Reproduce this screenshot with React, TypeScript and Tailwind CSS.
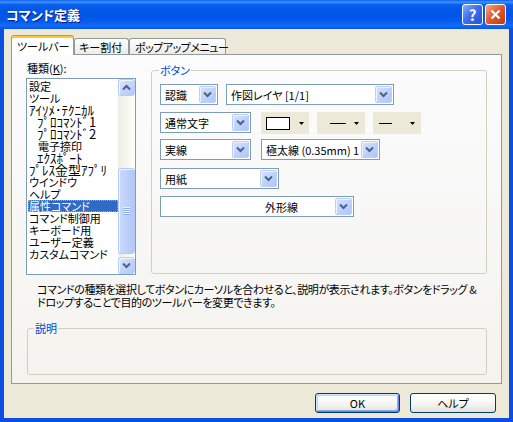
import type { ReactNode } from 'react';

const ITEMS: { label: string; indent?: 'sm' | 'md'; selected?: boolean; half?: boolean }[] = [
  { label: '設定' },
  { label: 'ツール' },
  { label: 'ｱｲｿﾒ･ﾃｸﾆｶﾙ', half: true },
  { label: 'ﾌﾟﾛｺﾏﾝﾄﾞ1', indent: 'sm', half: true },
  { label: 'ﾌﾟﾛｺﾏﾝﾄﾞ2', indent: 'sm', half: true },
  { label: '電子捺印', indent: 'md' },
  { label: 'ｴｸｽﾎﾟｰﾄ', indent: 'sm', half: true },
  { label: 'ﾌﾟﾚｽ金型ｱﾌﾟﾘ', half: true },
  { label: 'ウインドウ' },
  { label: 'ヘルプ' },
  { label: '属性コマンド', selected: true },
  { label: 'コマンド制御用' },
  { label: 'キーボード用' },
  { label: 'ユーザー定義' },
  { label: 'カスタムコマンド' },
];

function Chevron({ up = false }: { up?: boolean }) {
  return (
    <svg width="9" height="7" viewBox="0 0 9 7" className="block">
      <path
        d={up ? 'M1 5.5 L4.5 2 L8 5.5' : 'M1 1.5 L4.5 5 L8 1.5'}
        fill="none"
        stroke="#4D6185"
        strokeWidth="2"
      />
    </svg>
  );
}

function Tri({ className = '' }: { className?: string }) {
  return (
    <svg width="5" height="3" viewBox="0 0 5 3" className={`block ${className}`}>
      <polygon points="0,0 5,0 2.5,3" fill="#000" />
    </svg>
  );
}

function DropButton() {
  return (
    <div className="mr-[1px] flex h-[17px] w-[17px] shrink-0 items-center justify-center rounded-[2px] border border-[#BBCEF8] bg-[linear-gradient(135deg,#D6E3FE,#BCD0FB_60%,#AFC6F8)] shadow-[inset_1px_1px_0_#EEF3FF]">
      <Chevron />
    </div>
  );
}

function Combo({ className, children, textClass = 'pl-[4px]' }: { className: string; children: ReactNode; textClass?: string }) {
  return (
    <div className={`flex h-[21px] shrink-0 items-center border border-[#7F9DB9] bg-white ${className}`}>
      <span className={`min-w-0 flex-1 whitespace-nowrap ${textClass}`}>{children}</span>
      <DropButton />
    </div>
  );
}

function ScrollButton({ up = false }: { up?: boolean }) {
  return (
    <div className="flex h-[17px] w-[17px] shrink-0 items-center justify-center rounded-[3px] border border-[#B9CDF7] bg-[linear-gradient(135deg,#DCE7FE,#C1D3FC_55%,#B3C8F8)] shadow-[inset_1px_1px_0_#F4F7FF]">
      <Chevron up={up} />
    </div>
  );
}

function XpButton({ className, children, isDefault = false }: { className: string; children: ReactNode; isDefault?: boolean }) {
  return (
    <button
      type="button"
      className={`flex h-[20px] items-center justify-center rounded-[3px] border border-[#003C74] bg-[linear-gradient(to_bottom,#FFFFFF,#F5F5F1_55%,#E3E2D8)] ${
        isDefault
          ? 'shadow-[inset_1px_1px_0_#CEE7FF,inset_-1px_-1px_0_#6982EE,inset_2px_2px_0_#BCD4F6,inset_-2px_-2px_0_#89ADE4]'
          : ''
      } ${className}`}
    >
      {children}
    </button>
  );
}

export default function App() {
  return (
    <div className="relative flex h-[422px] w-[513px] flex-col overflow-hidden bg-[#0B4FE1] font-['Noto_Sans_CJK_JP','Noto_Sans_CJK_SC',sans-serif] text-[11px] leading-[12px] text-black [font-feature-settings:'palt']">
      {/* title bar */}
      <div className="flex h-[29px] shrink-0 items-center bg-[linear-gradient(to_bottom,#0A5DF0_0%,#3D95FF_7%,#0A5EEC_16%,#0055E5_45%,#0259EC_70%,#126BF8_88%,#0A55E0_100%)] pl-[6px] pr-[7px]">
        <span className="flex-1 text-[13px] font-bold leading-[14px] text-white [text-shadow:1px_1px_#0A1883]">コマンド定義</span>
        <div className="flex gap-[2px]">
          <div className="flex h-[21px] w-[21px] items-center justify-center rounded-[3px] border border-white bg-[linear-gradient(135deg,#8AADF9,#3F70EE_45%,#2451DB)] text-[15px] font-bold leading-[15px] text-white [font-feature-settings:normal]">
            ?
          </div>
          <div className="flex h-[21px] w-[21px] items-center justify-center rounded-[3px] border border-white bg-[linear-gradient(135deg,#F2AC8E,#E25B2E_45%,#C23A13)]">
            <svg width="11" height="11" viewBox="0 0 11 11">
              <path d="M1.5 1.5 L9.5 9.5 M9.5 1.5 L1.5 9.5" stroke="#fff" strokeWidth="2.2" />
            </svg>
          </div>
        </div>
      </div>

      {/* dialog body */}
      <div className="mx-[4px] mb-[4px] flex flex-1 flex-col bg-[#ECE9D8] px-[7px] pt-[6px]">
        {/* tabs */}
        <div className="flex h-[19px] items-end">
          <div className="relative z-10 -mb-px flex h-[20px] w-[63px] items-start whitespace-nowrap rounded-t-[3px] border border-b-0 border-[#919B9C] border-t-[#E68B2C] bg-white pl-[5px] pt-[4px] shadow-[inset_0_2px_0_#FFC73C]">
            ツールバー
          </div>
          <div className="flex h-[16px] w-[55px] items-start whitespace-nowrap rounded-t-[3px] border border-b-0 border-[#919B9C] bg-[linear-gradient(to_bottom,#FFFFFF,#ECEBE6)] pl-[4px] pt-[2px]">
            キー割付
          </div>
          <div className="flex h-[16px] w-[97px] items-start whitespace-nowrap rounded-t-[3px] border border-b-0 border-[#919B9C] bg-[linear-gradient(to_bottom,#FFFFFF,#ECEBE6)] pl-[5px] pt-[2px] tracking-[-0.5px]">
            ポップアップメニュー
          </div>
        </div>

        {/* tab page */}
        <div className="flex h-[330px] w-[491px] flex-col border border-[#919B9C] bg-[linear-gradient(to_bottom,#FCFCFE,#F4F3EE)] pl-[14px]">
          <div className="flex">
            <div className="flex w-[110px] flex-col pt-[7px]">
              <span className="ml-[1px]">
                種類(<span className="underline">K</span>):
              </span>
              <div className="mt-[4px] flex h-[197px] border border-[#7F9DB9] bg-white">
                <div className="flex-1 overflow-hidden pt-[1px]">
                  {ITEMS.map((it) => (
                    <div
                      key={it.label}
                      className={`ml-[1px] h-[12px] whitespace-nowrap leading-[12px] ${
                        it.indent === 'sm' ? 'pl-[9px]' : it.indent === 'md' ? 'pl-[10px]' : 'pl-[1px]'
                      } ${it.half ? 'text-[13px] [font-feature-settings:normal]' : ''} ${
                        it.selected
                          ? 'bg-[#316AC5] text-white outline-1 -outline-offset-1 outline-[#D9A441] outline-dotted'
                          : ''
                      }`}
                    >
                      {it.label}
                    </div>
                  ))}
                </div>
                <div className="flex w-[17px] flex-col bg-[linear-gradient(to_right,#EEEDE5,#FEFEFB)]">
                  <ScrollButton up />
                  <div className="flex-1 pt-[72px]">
                    <div className="flex h-[86px] items-center justify-center rounded-[3px] border border-[#B4C8F5] bg-[linear-gradient(to_right,#CAD9FD,#BCCFFB_60%,#B2C7F8)] shadow-[inset_1px_1px_0_#F0F4FF]">
                      <div className="flex w-[7px] flex-col">
                        <div className="h-px bg-[#EEF4FF]" />
                        <div className="h-px bg-[#8CAEF6]" />
                        <div className="h-px bg-[#EEF4FF]" />
                        <div className="h-px bg-[#8CAEF6]" />
                        <div className="h-px bg-[#EEF4FF]" />
                        <div className="h-px bg-[#8CAEF6]" />
                        <div className="h-px bg-[#EEF4FF]" />
                        <div className="h-px bg-[#8CAEF6]" />
                      </div>
                    </div>
                  </div>
                  <ScrollButton />
                </div>
              </div>
            </div>

            {/* ボタン group */}
            <fieldset className="ml-[15px] mt-[9px] h-[210px] w-[336px] rounded-[3px] border border-[#D0D0BF] pl-[8px] pt-[8px]">
              <legend className="-ml-[1px] px-[1px] leading-[12px] text-[#0046D5]">ボタン</legend>
              <div className="flex gap-[8px]">
                <Combo className="w-[58px]">認識</Combo>
                <Combo className="w-[168px]">作図レイヤ [1/1]</Combo>
              </div>
              <div className="mt-[7px] flex items-start">
                <Combo className="w-[91px]">通常文字</Combo>
                <div className="ml-[10px] flex h-[22px] w-[48px] items-center bg-[#ECE9D8] pl-[5px]">
                  <div className="h-[13px] w-[24px] border border-black bg-white" />
                  <Tri className="ml-[9px]" />
                </div>
                <div className="ml-[8px] flex h-[22px] w-[48px] items-center bg-[#ECE9D8] pl-[13px]">
                  <div className="h-px w-[16px] bg-black" />
                  <Tri className="ml-[8px]" />
                </div>
                <div className="ml-[8px] flex h-[22px] w-[48px] items-center bg-[#ECE9D8] pl-[6px]">
                  <div className="h-px w-[13px] bg-black" />
                  <Tri className="ml-[18px]" />
                </div>
              </div>
              <div className="mt-[5px] flex">
                <Combo className="w-[91px]">実線</Combo>
                <Combo className="ml-[10px] w-[119px]">極太線 (0.35mm) 1</Combo>
              </div>
              <Combo className="mt-[8px] w-[119px]">用紙</Combo>
              <Combo className="mt-[7px] w-[194px]" textClass="pl-[104px]">
                外形線
              </Combo>
            </fieldset>
          </div>

          <p className="ml-[11px] mt-[8px] whitespace-nowrap leading-[13px] tracking-[-0.4px]">
            コマンドの種類を選択してボタンにカーソルを合わせると、説明が表示されます。ボタンをドラッグ &amp;
            <br />
            ドロップすることで目的のツールバーを変更できます。
          </p>

          {/* 説明 group */}
          <fieldset className="ml-[1px] mt-[13px] h-[53px] w-[460px] rounded-[3px] border border-[#D0D0BF] pl-[7px]">
            <legend className="-ml-[1px] px-[1px] leading-[12px] text-[#0046D5]">説明</legend>
          </fieldset>
        </div>

        {/* buttons */}
        <div className="mt-[9px] flex justify-end gap-[10px] pr-[6px]">
          <XpButton className="w-[85px]" isDefault>
            OK
          </XpButton>
          <XpButton className="w-[86px]">ヘルプ</XpButton>
        </div>
      </div>
    </div>
  );
}
